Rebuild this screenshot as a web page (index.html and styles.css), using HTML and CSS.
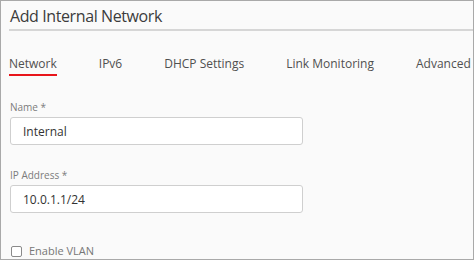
FILE: index.html
```html
<!DOCTYPE html>
<html lang="en">
<head>
  <meta charset="UTF-8">
  <title>Add Internal Network</title>
  <link rel="stylesheet" href="styles.css">
</head>
<body>
  <div class="panel">
    <h1 class="title">Add Internal Network</h1>

    <!-- Tabs -->
    <div class="tabs">
      <span class="tab active">Network</span>
      <span class="tab">IPv6</span>
      <span class="tab">DHCP Settings</span>
      <span class="tab">Link Monitoring</span>
      <span class="tab">Advanced</span>
    </div>

    <div class="form-group">
      <label for="name">Name *</label>
      <input type="text" id="name" value="Internal">
    </div>
    <div class="form-group">
      <label for="ip">IP Address *</label>
      <input type="text" id="ip" value="10.0.1.1/24">
    </div>
    <div class="check">
      <span class="box"></span>
      <span>Enable VLAN</span>
    </div>
  </div>
</body>
</html>
```

FILE: styles.css
```css
body {
  margin: 0;
  font-family: "Open Sans", sans-serif;
  background: #fff;
}
.panel {
  width: 474px;
  height: 260px;
  box-sizing: border-box;
  border: 1px solid #a9a9a9;
  background: #fafafa;
  padding: 0 0 0 8px;
  overflow: hidden;
}
.title {
  margin: 0;
  padding: 4px 0 2px 1px;
  line-height: 22px;
  font-size: 16px;
  letter-spacing: -0.4px;
  font-weight: normal;
  color: #3c3c3c;
  border-bottom: 2px solid #d6d6d6;
}
.tabs {
  display: flex;
  gap: 42px;
  margin-top: 25px;
  font-size: 12px;
  line-height: 16px;
  color: #505050;
  white-space: nowrap;
}
.tab {
  flex-shrink: 0;
  padding-bottom: 2px;
  border-bottom: 2px solid transparent;
}
.tab.active {
  border-bottom-color: #e8151b;
}
.form-group {
  margin-top: 24px;
  padding-left: 1px;
}
.form-group + .form-group {
  margin-top: 23px;
}
label {
  display: block;
  font-size: 10px;
  line-height: 14px;
  color: #7c7c7c;
  margin-bottom: 3px;
}
input {
  display: block;
  width: 293px;
  height: 28px;
  box-sizing: border-box;
  border: 1px solid #cfcfcf;
  border-radius: 3px;
  background: #fff;
  padding: 0 12px;
  font-family: "Open Sans", sans-serif;
  font-size: 12px;
  color: #333;
}
.check {
  display: flex;
  align-items: center;
  gap: 7px;
  margin-top: 30px;
  padding-left: 2px;
  font-size: 11px;
  line-height: 16px;
  color: #777;
}
.box {
  width: 9px;
  height: 9px;
  border: 1px solid #8a8a8a;
  border-radius: 2px;
  background: #fff;
}
```
